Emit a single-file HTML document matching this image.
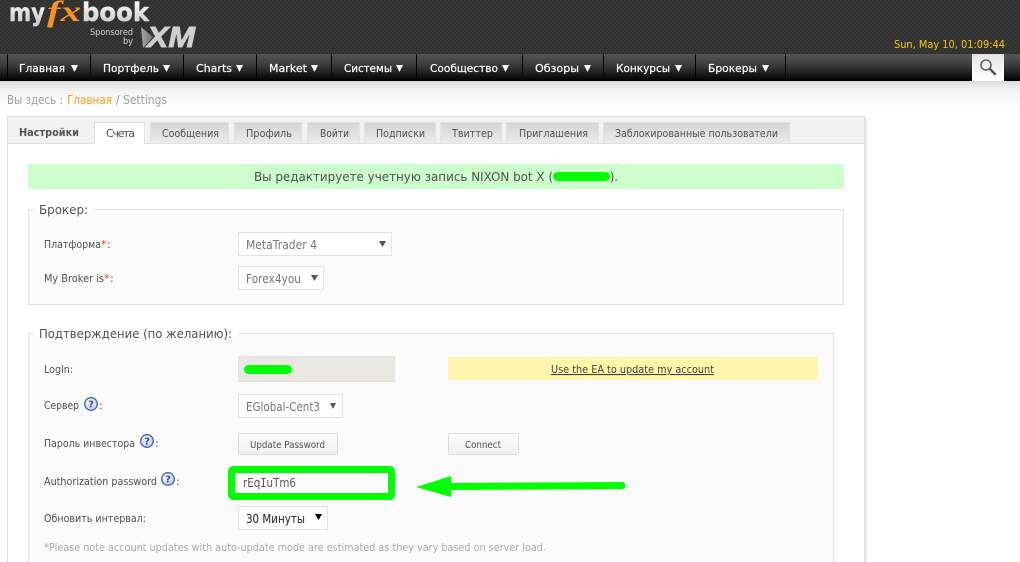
<!DOCTYPE html>
<html lang="ru"><head><meta charset="utf-8"><title>Settings</title>
<style>
html,body{margin:0;padding:0;background:#fff;width:1020px;height:562px;overflow:hidden}
svg{display:block}
text{font-family:"DejaVu Sans","Liberation Sans",sans-serif;font-size:11px;fill:#505050}
</style></head><body>
<svg width="1020" height="562" viewBox="0 0 1020 562" xmlns="http://www.w3.org/2000/svg">
<defs>
<pattern id="hatch" width="4" height="4" patternUnits="userSpaceOnUse"><rect width="4" height="4" fill="#383838"/><path d="M-1 1L1 -1M0 4L4 0M3 5L5 3" stroke="#2c2c2c" stroke-width="1.2"/></pattern>
<linearGradient id="nav" x1="0" y1="0" x2="0" y2="1"><stop offset="0" stop-color="#565656"/><stop offset=".45" stop-color="#383838"/><stop offset="1" stop-color="#000"/></linearGradient>
<linearGradient id="sh" x1="0" y1="0" x2="0" y2="1"><stop offset="0" stop-color="#dcdcdc"/><stop offset=".35" stop-color="#f2f2f2"/><stop offset="1" stop-color="#fff"/></linearGradient>
<linearGradient id="tab" x1="0" y1="0" x2="0" y2="1"><stop offset="0" stop-color="#d4d4d4"/><stop offset="1" stop-color="#ececec"/></linearGradient>
<linearGradient id="logo" x1="0" y1="0" x2="0" y2="1"><stop offset="0" stop-color="#fff"/><stop offset="1" stop-color="#c4c4c4"/></linearGradient>
<linearGradient id="srch" x1="0" y1="0" x2="0" y2="1"><stop offset="0" stop-color="#e4e4e4"/><stop offset="1" stop-color="#fff"/></linearGradient>
<linearGradient id="btn" x1="0" y1="0" x2="0" y2="1"><stop offset="0" stop-color="#fdfdfd"/><stop offset="1" stop-color="#efefef"/></linearGradient>
<linearGradient id="pshadow" x1="0" y1="0" x2="1" y2="0"><stop offset="0" stop-color="#e6e6e6"/><stop offset="1" stop-color="#fff"/></linearGradient>
<linearGradient id="chev" x1="0" y1="0" x2="1" y2="0"><stop offset="0" stop-color="#a8a8a8"/><stop offset="1" stop-color="#6f6f6f"/></linearGradient>
<radialGradient id="q" cx=".4" cy=".35" r=".7"><stop offset="0" stop-color="#fff"/><stop offset="1" stop-color="#b9c9ec"/></radialGradient>
<g id="help"><circle r="6.3" fill="url(#q)" stroke="#3f62b5" stroke-width="1.3"/><text y="3.6" text-anchor="middle" style="font-size:10px;font-weight:bold;fill:#2d4fa5">?</text></g>
</defs>

<!-- header -->
<rect width="1020" height="54" fill="url(#hatch)"/>
<text x="9" y="21" textLength="36" lengthAdjust="spacingAndGlyphs" style="font-size:25px;font-weight:bold;fill:url(#logo);stroke:#ddd;stroke-width:.5">my</text>
<text x="47" y="21" textLength="34" lengthAdjust="spacingAndGlyphs" style="font-family:'Liberation Serif',serif;font-size:30px;font-style:italic;font-weight:bold;fill:#f7931e">fx</text>
<text x="82" y="21" textLength="67" lengthAdjust="spacingAndGlyphs" style="font-size:26px;font-weight:bold;fill:url(#logo);stroke:#ddd;stroke-width:.5">book</text>
<text x="90" y="35" textLength="43" lengthAdjust="spacingAndGlyphs" style="font-size:9px;fill:#d8d8d8">Sponsored</text>
<text x="123" y="44" textLength="10" lengthAdjust="spacingAndGlyphs" style="font-size:9px;fill:#d8d8d8">by</text>
<polygon points="141,27 153,37 143,48" fill="url(#chev)"/>
<text x="147" y="47" textLength="48" lengthAdjust="spacingAndGlyphs" style="font-family:'Liberation Sans',sans-serif;font-size:29px;font-weight:bold;font-style:italic;fill:#cfcfcf;stroke:#cfcfcf;stroke-width:.9">XM</text>
<text x="894" y="48" textLength="111" lengthAdjust="spacingAndGlyphs" style="fill:#f6c800">Sun, May 10, 01:09:44</text>

<!-- nav -->
<rect y="54" width="1020" height="27" fill="url(#nav)"/>
<path d="M7.5 54V81M90.5 54V81M183.5 54V81M256.5 54V81M331.5 54V81M416.5 54V81M522.5 54V81M603.5 54V81M695.5 54V81M785.5 54V81" stroke="#000"/>
<g>
<text x="19" y="72" textLength="46" lengthAdjust="spacingAndGlyphs" style="fill:#fff;stroke:#fff;stroke-width:.2">Главная</text><polygon points="71,65 78,65 74.5,72" fill="#fff"/>
<text x="103" y="72" textLength="56" lengthAdjust="spacingAndGlyphs" style="fill:#fff;stroke:#fff;stroke-width:.2">Портфель</text><polygon points="163,65 170,65 166.5,72" fill="#fff"/>
<text x="196" y="72" textLength="36" lengthAdjust="spacingAndGlyphs" style="fill:#fff;stroke:#fff;stroke-width:.2">Charts</text><polygon points="236,65 243,65 239.5,72" fill="#fff"/>
<text x="269" y="72" textLength="38" lengthAdjust="spacingAndGlyphs" style="fill:#fff;stroke:#fff;stroke-width:.2">Market</text><polygon points="311,65 318,65 314.5,72" fill="#fff"/>
<text x="344" y="72" textLength="48" lengthAdjust="spacingAndGlyphs" style="fill:#fff;stroke:#fff;stroke-width:.2">Системы</text><polygon points="396,65 403,65 399.5,72" fill="#fff"/>
<text x="430" y="72" textLength="68" lengthAdjust="spacingAndGlyphs" style="fill:#fff;stroke:#fff;stroke-width:.2">Сообщество</text><polygon points="502,65 509,65 505.5,72" fill="#fff"/>
<text x="535" y="72" textLength="44" lengthAdjust="spacingAndGlyphs" style="fill:#fff;stroke:#fff;stroke-width:.2">Обзоры</text><polygon points="584,65 591,65 587.5,72" fill="#fff"/>
<text x="616" y="72" textLength="54" lengthAdjust="spacingAndGlyphs" style="fill:#fff;stroke:#fff;stroke-width:.2">Конкурсы</text><polygon points="675,65 682,65 678.5,72" fill="#fff"/>
<text x="708" y="72" textLength="49" lengthAdjust="spacingAndGlyphs" style="fill:#fff;stroke:#fff;stroke-width:.2">Брокеры</text><polygon points="762,65 769,65 765.5,72" fill="#fff"/>
</g>
<rect x="972" y="54" width="32" height="27" fill="url(#srch)"/>
<circle cx="986" cy="65" r="5" fill="none" stroke="#666" stroke-width="1.6"/>
<path d="M990 69L995 74" stroke="#555" stroke-width="2.4" stroke-linecap="round"/>

<!-- shadow under nav -->
<rect y="81" width="1020" height="26" fill="url(#sh)"/>

<!-- breadcrumb -->
<text x="7" y="104" textLength="56" lengthAdjust="spacingAndGlyphs" style="font-size:12px;fill:#a0a0a0">Вы здесь :</text>
<text x="67" y="104" textLength="45" lengthAdjust="spacingAndGlyphs" style="font-size:12px;fill:#ff9a1f">Главная</text>
<text x="116" y="104" textLength="51" lengthAdjust="spacingAndGlyphs" style="font-size:12px;fill:#a0a0a0">/ Settings</text>

<!-- panel -->
<rect x="865" y="118" width="4" height="444" fill="url(#pshadow)"/>
<rect x="7.5" y="116.5" width="857" height="460" fill="#fff" stroke="#dedede"/>
<rect x="8" y="117" width="856" height="26" fill="#f2f2f2"/>
<path d="M8 143.5H864" stroke="#dedede"/>
<!-- tabs -->
<g fill="url(#tab)" stroke="#e2e2e2">
<rect x="150.5" y="122.5" width="78" height="21"/>
<rect x="234.5" y="122.5" width="67" height="21"/>
<rect x="307.5" y="122.5" width="52" height="21"/>
<rect x="364.5" y="122.5" width="71" height="21"/>
<rect x="440.5" y="122.5" width="61" height="21"/>
<rect x="506.5" y="122.5" width="92" height="21"/>
<rect x="603.5" y="122.5" width="186" height="21"/>
</g>
<path d="M94.5 144V122.5H144.5V144" fill="#fff" stroke="#e0e0e0"/>
<text x="19" y="136" textLength="60" lengthAdjust="spacingAndGlyphs" style="font-weight:bold;fill:#555">Настройки</text>
<text x="106" y="137" textLength="29">Счета</text>
<text x="162" y="137" textLength="57" lengthAdjust="spacingAndGlyphs">Сообщения</text>
<text x="246" y="137" textLength="46" lengthAdjust="spacingAndGlyphs">Профиль</text>
<text x="320" y="137" textLength="29" lengthAdjust="spacingAndGlyphs">Войти</text>
<text x="376" y="137" textLength="49" lengthAdjust="spacingAndGlyphs">Подписки</text>
<text x="452" y="137" textLength="41" lengthAdjust="spacingAndGlyphs">Твиттер</text>
<text x="519" y="137" textLength="69" lengthAdjust="spacingAndGlyphs">Приглашения</text>
<text x="615" y="137" textLength="163" lengthAdjust="spacingAndGlyphs">Заблокированные пользователи</text>

<!-- notice -->
<rect x="28" y="164" width="816" height="25" fill="#ccffcc"/>
<text x="254" y="181" textLength="299" lengthAdjust="spacingAndGlyphs" style="font-size:12px">Вы редактируете учетную запись NIXON bot X (</text>
<rect x="553" y="172" width="57" height="9" rx="4.5" fill="#00ff00"/>
<text x="610" y="181" textLength="8" lengthAdjust="spacingAndGlyphs" style="font-size:12px">).</text>

<!-- fieldset broker -->
<rect x="28.5" y="209.5" width="815" height="95" fill="#fbfbfb" stroke="#e2e2e2"/>
<rect x="34" y="205" width="60" height="8" fill="#fff"/>
<text x="39" y="214" textLength="49" lengthAdjust="spacingAndGlyphs" style="font-size:12px">Брокер:</text>
<text x="44" y="248" textLength="57" lengthAdjust="spacingAndGlyphs">Платформа</text><text x="101" y="248" style="fill:#f33">*</text><text x="107" y="248">:</text>
<rect x="238.5" y="232.5" width="153" height="23" fill="#fff" stroke="#e2e2e2"/>
<text x="246" y="249" textLength="71" lengthAdjust="spacingAndGlyphs" style="font-size:12px;fill:#777">MetaTrader 4</text>
<polygon points="379,241 386,241 382.5,247" fill="#555"/>
<text x="44" y="282" textLength="60" lengthAdjust="spacingAndGlyphs">My Broker is</text><text x="104" y="282" style="fill:#f33">*</text><text x="110" y="282">:</text>
<rect x="238.5" y="266.5" width="85" height="23" fill="#fff" stroke="#e2e2e2"/>
<text x="246" y="283" textLength="55" lengthAdjust="spacingAndGlyphs" style="font-size:12px;fill:#777">Forex4you</text>
<polygon points="311,275 318,275 314.5,281" fill="#555"/>

<!-- fieldset confirmation -->
<rect x="28.5" y="333.5" width="805" height="240" fill="#fbfbfb" stroke="#e2e2e2"/>
<rect x="34" y="329" width="204" height="8" fill="#fff"/>
<text x="39" y="338" textLength="193" lengthAdjust="spacingAndGlyphs" style="font-size:12px">Подтверждение (по желанию):</text>

<text x="44" y="373" textLength="29" lengthAdjust="spacingAndGlyphs">Login:</text>
<rect x="238.5" y="356.5" width="156" height="25" fill="#e9e8e2" stroke="#e2e2e2"/>
<rect x="244" y="365" width="48" height="9" rx="4.5" fill="#00ff00"/>
<rect x="448" y="357" width="370" height="23" fill="#fff5ac"/>
<text x="551" y="373" textLength="163" lengthAdjust="spacingAndGlyphs" style="fill:#444;text-decoration:underline">Use the EA to update my account</text>

<text x="44" y="409" textLength="35" lengthAdjust="spacingAndGlyphs">Сервер</text>
<use href="#help" x="91" y="404"/><text x="99" y="409">:</text>
<rect x="238.5" y="394.5" width="104" height="23" fill="#fff" stroke="#e2e2e2"/>
<text x="246" y="411" textLength="74" lengthAdjust="spacingAndGlyphs" style="font-size:12px;fill:#777">EGlobal-Cent3</text>
<polygon points="330,403 336,403 333,409" fill="#555"/>

<text x="44" y="447" textLength="91" lengthAdjust="spacingAndGlyphs">Пароль инвестора</text>
<use href="#help" x="147" y="441"/><text x="155" y="447">:</text>
<rect x="238.5" y="433.5" width="99" height="21" rx="2" fill="url(#btn)" stroke="#dcdcdc"/>
<text x="250" y="448" textLength="75" lengthAdjust="spacingAndGlyphs" style="font-size:10px">Update Password</text>
<rect x="448.5" y="433.5" width="70" height="21" rx="2" fill="url(#btn)" stroke="#dcdcdc"/>
<text x="465" y="448" textLength="36" lengthAdjust="spacingAndGlyphs" style="font-size:10px">Connect</text>

<text x="44" y="485" textLength="113" lengthAdjust="spacingAndGlyphs">Authorization password</text>
<use href="#help" x="168" y="479"/><text x="176" y="485">:</text>
<rect x="231.5" y="469.5" width="160" height="27" rx="2" fill="#fff" stroke="#00ff00" stroke-width="7"/>
<text x="243" y="487" textLength="53" lengthAdjust="spacingAndGlyphs" style="font-size:12px;fill:#555">rEq<tspan style="font-family:'DejaVu Sans Mono',monospace">I</tspan>uTm6</text>

<text x="44" y="522" textLength="102" lengthAdjust="spacingAndGlyphs">Обновить интервал:</text>
<rect x="238.5" y="506.5" width="89" height="23" fill="#fff" stroke="#e2e2e2"/>
<text x="246" y="523" textLength="59" lengthAdjust="spacingAndGlyphs" style="font-size:12px;fill:#222">30 Минуты</text>
<polygon points="315,514 322,514 318.5,520" fill="#000"/>

<text x="44" y="551" textLength="502" lengthAdjust="spacingAndGlyphs" style="fill:#aaa">*Please note account updates with auto-update mode are estimated as they vary based on server load.</text>

<!-- arrow -->
<polygon points="416,487 451,476 451,497" fill="#00ff00"/>
<path d="M450 486.5L622 485.5" stroke="#00ff00" stroke-width="7" stroke-linecap="round"/>
</svg>
</body></html>
